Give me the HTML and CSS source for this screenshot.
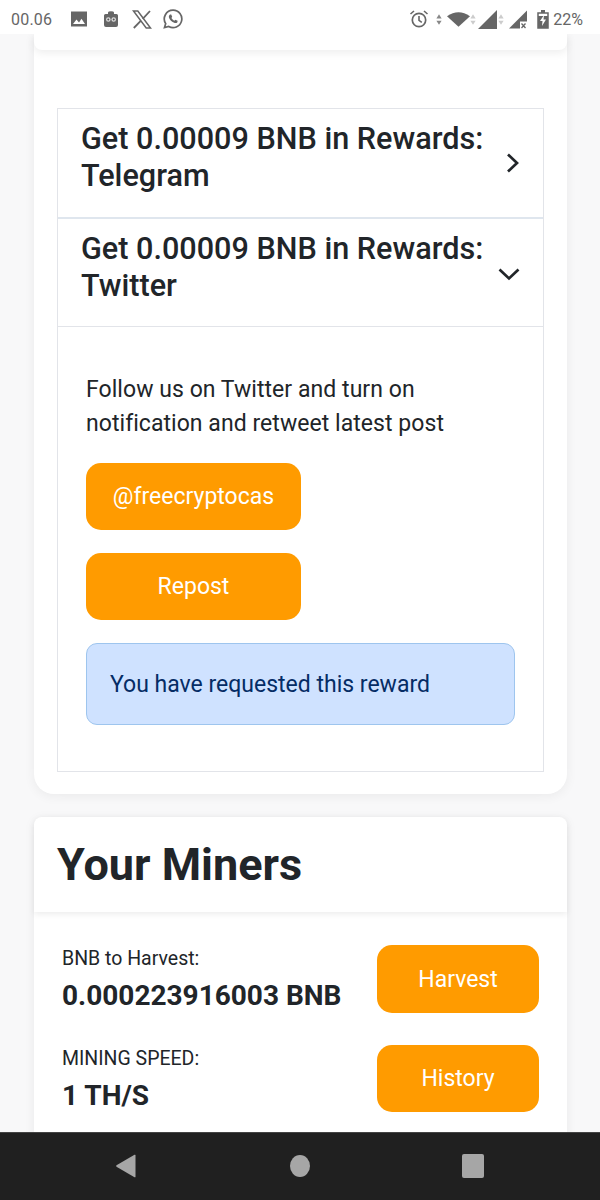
FILE: index.html
```html
<!DOCTYPE html>
<html lang="en">
<head>
<meta charset="utf-8">
<title>Your Miners</title>
<link rel="stylesheet" href="styles.css">
</head>
<body>
<div class="screen">
  <header class="status">
    <div class="status-left">
      <span class="clock">00.06</span>
      <svg class="ic-photo" width="18" height="18" viewBox="0 0 18 18"><path fill="#666" d="M1 1.500h16v15H1z"/><path fill="#fff" d="M3 14l3.500-4.500 2.500 3 2.500-3.800L15 14z"/></svg>
      <svg class="ic-owl" width="18" height="18" viewBox="0 0 18 18"><path fill="#666" d="M2 5.500Q2 4 3.500 4H6V2.500Q6 1.200 9 1.200T12 2.500V4h2.500Q16 4 16 5.500V15q0 2-2 2H4q-2 0-2-2z"/><circle cx="6.300" cy="9.500" r="2.300" fill="#ddd"/><circle cx="11.700" cy="9.500" r="2.300" fill="#ddd"/><circle cx="6.300" cy="9.500" r="1" fill="#555"/><circle cx="11.700" cy="9.500" r="1" fill="#555"/></svg>
      <svg class="ic-x" width="20" height="19" viewBox="0 0 20 19"><path fill="none" stroke="#666" stroke-width="1.500" d="M1.500 1h4.300l12.700 17h-4.300z"/><path fill="none" stroke="#666" stroke-width="1.800" d="M18 1l-7.300 7.800M9 10.700L1.800 18"/></svg>
      <svg class="ic-wa" width="20" height="20" viewBox="0 0 20 20"><path fill="none" stroke="#666" stroke-width="1.700" d="M10 1.200a8.700 8.700 0 1 1-4.300 16.200l-4.200 1.200 1.200-4A8.700 8.700 0 0 1 10 1.200z"/><path fill="#666" d="M7 5.500l1.200 0 1 2.300-.8 1.200q1 1.800 2.800 2.700l1.200-1 2.200 1.100-.2 1.400q-1 1.200-2.600.8-4.800-1.500-6-6-.2-1.500 1.200-2.500z"/></svg>
    </div>
    <div class="status-right">
      <svg class="alarm" width="20" height="20" viewBox="0 0 20 20"><circle cx="10" cy="11" r="6.700" fill="none" stroke="#666" stroke-width="1.700"/><path fill="none" stroke="#666" stroke-width="1.600" d="M10 7v4.300l2.800 2M1.500 5l3.500-3M18.500 5L15 2"/></svg>
      <svg class="arrows a1" width="6" height="15" viewBox="0 0 8 16"><path fill="#888" d="M4 1l3.500 5.500h-7z"/><path fill="#888" d="M4 15L.5 9.500h7z"/></svg>
      <svg class="wifi" width="23" height="16" viewBox="0 0 24 16"><path fill="#666" d="M0 5Q12-3 24 5L12 16z"/></svg>
      <svg class="arrows a2" width="6" height="15" viewBox="0 0 8 16"><path fill="#ccc" d="M4 1l3.500 5.500h-7zM4 15L.5 9.500h7z"/></svg>
      <svg class="sig" width="19" height="19" viewBox="0 0 18 18"><path fill="#666" d="M18 0v18H0z"/></svg>
      <svg class="arrows a3" width="6" height="15" viewBox="0 0 8 16"><path fill="#ccc" d="M4 1l3.500 5.500h-7zM4 15L.5 9.500h7z"/></svg>
      <svg class="sig2" width="18" height="19" viewBox="0 0 18 18"><path fill="#666" d="M18 0v11h-7v7H0z"/><path stroke="#666" stroke-width="1.300" d="M12.500 13l4 4.500M16.500 13l-4 4.500"/></svg>
      <svg class="batt" width="12" height="20" viewBox="0 0 12 20"><path fill="none" stroke="#666" stroke-width="1.500" d="M1 4h10v15H1z"/><path fill="#666" d="M4 1h4v3H4zM1 7h10v12H1z"/><path fill="#fff" d="M7 6L3 12h2.500L5 17l4-6.500H6.500z"/></svg>
      <span class="pct">22%</span>
    </div>
  </header>

  <main class="page">
    <section class="card card-rewards">
      <div class="card-top"></div>
      <div class="accordion">
        <div class="acc-row acc-closed">
          <h3 class="acc-title">Get 0.00009 BNB in Rewards: Telegram</h3>
          <svg class="chev chev-right" width="14" height="20" viewBox="0 0 14 20"><path fill="none" stroke="#212529" stroke-width="2.700" d="M2 1.500l9 8.500-9 8.500"/></svg>
        </div>
        <div class="acc-row acc-open">
          <h3 class="acc-title">Get 0.00009 BNB in Rewards: Twitter</h3>
          <svg class="chev chev-down" width="22" height="14" viewBox="0 0 22 14"><path fill="none" stroke="#212529" stroke-width="2.700" d="M1.500 2.500l9.500 9 9.500-9"/></svg>
        </div>
        <div class="acc-body">
          <p class="acc-text">Follow us on Twitter and turn on notification and retweet latest post</p>
          <a class="btn btn-social">@freecryptocas</a>
          <a class="btn btn-social">Repost</a>
          <div class="alert">You have requested this reward</div>
        </div>
      </div>
    </section>

    <section class="card card-miners">
      <h2 class="miners-head">Your Miners</h2>
      <div class="miners-body">
        <div class="stat">
          <div class="stat-info">
            <div class="stat-label">BNB to Harvest:</div>
            <div class="stat-value">0.000223916003 BNB</div>
          </div>
          <a class="btn btn-stat btn-harvest">Harvest</a>
        </div>
        <div class="stat">
          <div class="stat-info">
            <div class="stat-label">MINING SPEED:</div>
            <div class="stat-value">1 TH/S</div>
          </div>
          <a class="btn btn-stat">History</a>
        </div>
      </div>
    </section>
  </main>

  <nav class="navbar">
    <svg width="22" height="24" viewBox="0 0 22 24"><path fill="#a6a6a6" d="M20.500 1v22q-.2.500-1 .2L1.500 12.800q-.8-.8 0-1.600L19.500.8q.8-.3 1 .2z"/></svg>
    <svg width="20" height="22" viewBox="0 0 20 22"><ellipse cx="10" cy="11" rx="10" ry="11" fill="#a6a6a6"/></svg>
    <svg width="22" height="24" viewBox="0 0 22 24"><rect width="22" height="24" rx="2" fill="#a6a6a6"/></svg>
  </nav>
</div>
</body>
</html>
```

FILE: styles.css
```css
* { box-sizing: border-box; }
html, body { margin: 0; padding: 0; }
body {
  font-family: Roboto, "Liberation Sans", sans-serif;
  color: #212529;
  background: #f8f8f9;
}
.screen {
  width: 600px;
  height: 1200px;
  display: flex;
  flex-direction: column;
  overflow: hidden;
}

/* status bar */
.status {
  height: 34px;
  flex: none;
  background: #fff;
  display: flex;
  justify-content: space-between;
  align-items: center;
  padding: 4px 17px 0 11px;
  position: relative;
  z-index: 2;
  color: #666;
}
.status-left, .status-right { display: flex; align-items: center; }
.clock { font-size: 16px; width: 59px; letter-spacing: .2px; }
.ic-photo { margin-right: 14px; }
.ic-owl { margin-right: 12px; }
.ic-x { margin-right: 11px; }
.status-right svg { flex: none; }
.alarm { margin-right: 7px; }
.a1 { margin-right: 5px; }
.a3 { margin: 0 5px 0 1px; }
.a2 { margin-right: 2px; }
.batt { margin: 0 4px 0 10px; }
.pct { font-size: 16px; }

/* page */
.page {
  flex: 1;
  min-height: 0;
  overflow: hidden;
  padding: 0 33px 0 34px;
}
.card {
  background: #fff;
  box-shadow: 0 2px 12px rgba(0, 0, 0, .06);
}
.card-rewards {
  border-radius: 0 0 20px 20px;
  padding: 0 23px 22px;
}
.card-top {
  height: 16px;
  margin: 0 -23px 58px;
  border-radius: 0 0 8px 8px;
  box-shadow: 0 3px 8px rgba(0, 0, 0, .07);
}
.accordion { border: 1px solid #e2e4e9; }
.acc-row {
  padding: 11px 23px 0;
  display: flex;
  justify-content: space-between;
}
.acc-closed { height: 110px; border-bottom: 2px solid #dfe6ee; }
.acc-open { height: 108px; border-bottom: 1px solid #e2e4e9; }
.acc-title {
  margin: 0;
  font-size: 30.600px;
  line-height: 37px;
  font-weight: 500;
  width: 425px;
}
.chev { flex: none; }
.chev-right { margin: 33px 0 0 0; }
.chev-down { margin: 37px 0 0 -5px; }
.acc-body { padding: 46px 28px 46px; }
.acc-text {
  margin: 0 0 22px;
  font-size: 23px;
  letter-spacing: .05px;
  line-height: 34px;
  width: 400px;
}
.btn {
  display: flex;
  align-items: center;
  justify-content: center;
  background: #ff9b00;
  color: #fff;
  font-size: 23px;
}
.btn-social {
  width: 215px;
  height: 67px;
  margin-bottom: 23px;
  border-radius: 15px;
}
.alert {
  height: 82px;
  padding: 0 23px;
  display: flex;
  align-items: center;
  background: #cfe2ff;
  border: 1px solid #9ec5ee;
  border-radius: 11px;
  color: #052c65;
  font-size: 23px;
}

.card-miners {
  margin-top: 23px;
  border-radius: 8px 8px 0 0;
}
.miners-head {
  margin: 0;
  height: 95px;
  padding: 0 23px;
  display: flex;
  align-items: center;
  font-size: 45px;
  font-weight: 700;
  box-shadow: 0 2px 6px rgba(0, 0, 0, .08);
  border-radius: 8px 8px 0 0;
}
.miners-body { padding: 33px 28px 40px; }
.stat {
  display: flex;
  justify-content: space-between;
  align-items: flex-start;
  margin-bottom: 29px;
}
.stat-label { font-size: 19.500px; line-height: 26px; margin-top: 1px; }
.stat-value {
  font-size: 28px;
  line-height: 40px;
  font-weight: 700;
  margin-top: 4px;
}
.btn-stat {
  width: 162px;
  height: 67px;
  border-radius: 15px;
}
.btn-harvest { height: 68px; }

.navbar {
  height: 68px;
  flex: none;
  background: #202020;
  border-top: 1px solid #444;
  display: flex;
  align-items: center;
  justify-content: space-between;
  padding: 0 116px 1px 115px;
  position: relative;
  z-index: 2;
}
```
